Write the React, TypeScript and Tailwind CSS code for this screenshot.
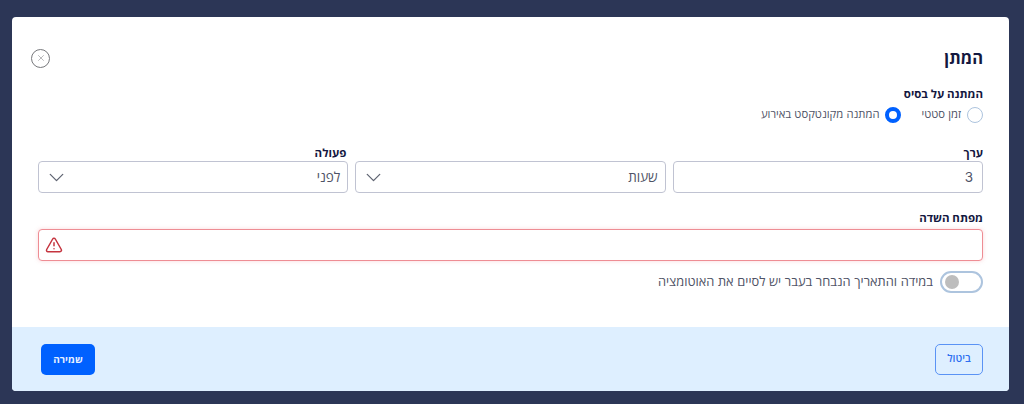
import { ChevronDown, TriangleAlert, X } from "lucide-react";

const labelClass = "block text-[11.5px] leading-[14px] font-bold text-[#14183f]";
const boxClass = "flex h-[32px] items-center rounded-[4px] border border-[#c0c3d2] bg-white pr-[7px] pl-[5px] text-[13.5px] text-[#4f5366]";

function Select({ value, label }: { value: string; label?: string }) {
  return (
    <div className="min-w-0 flex-1">
      <label className={`${labelClass} mb-[1px] h-[14px] pr-[2px]`}>{label}</label>
      <div className={`${boxClass} justify-between`}>
        <span>{value}</span>
        <ChevronDown size={25} strokeWidth={1.25} className="text-[#5f6472]" />
      </div>
    </div>
  );
}

export default function App() {
  return (
    <div className="h-[404px] w-[1024px] overflow-hidden bg-[#2c3656] pt-[17px] pl-[12px] font-['Inter','Open_Sans','Liberation_Sans',sans-serif]">
      <div dir="rtl" className="flex h-[374px] w-[997px] flex-col overflow-hidden rounded-[4px] bg-white">
        <div className="flex-1 px-[26px]">
          <div className="mt-[21px] flex h-[30px] items-center justify-between pt-[10px]">
            <h2 className="text-[16.5px] leading-[20px] font-bold text-[#14183f]">המתן</h2>
            <button className="ml-[-7px] flex h-[19px] w-[19px] items-center justify-center rounded-full border-[1.5px] border-[#77787c] text-[#77787c]">
              <X size={10} strokeWidth={1.25} />
            </button>
          </div>

          <label className={`${labelClass} mt-[19px]`}>המתנה על בסיס</label>
          <div className="mt-[5px] flex h-[17px] items-center gap-[21px] text-[11.25px] text-[#4f5366]">
            <label className="flex items-center gap-[6px]">
              <span className="h-[16px] w-[16px] rounded-full border-[1.5px] border-[#adc4de] bg-white" />
              זמן סטטי
            </label>
            <label className="flex items-center gap-[5px]">
              <span className="h-[16px] w-[16px] rounded-full border-[4px] border-[#0061ff] bg-white" />
              המתנה מקונטקסט באירוע
            </label>
          </div>

          <div className="mt-[23px] flex gap-[7px]">
            <div className="min-w-0 flex-1">
              <label className={`${labelClass} mb-[1px] h-[14px]`}>ערך</label>
              <div className={`${boxClass} h-[30px] pr-[9px]`}>3</div>
            </div>
            <Select value="שעות" />
            <Select value="לפני" label="פעולה" />
          </div>

          <label className={`${labelClass} mt-[18px]`}>מפתח השדה</label>
          <div className="mt-[4px] flex h-[32px] items-center justify-end rounded-[4px] border border-[#ee8d94] bg-white px-[6px] shadow-[0_0_4px_rgba(238,141,148,0.35)]">
            <TriangleAlert size={18} strokeWidth={2} className="text-[#c5343f]" />
          </div>

          <div className="mt-[10px] flex items-center gap-[7px]">
            <span className="flex h-[22px] w-[43px] items-center justify-end rounded-full border-[2px] border-[#adc4de] bg-white px-[3px]">
              <span className="h-[14px] w-[14px] rounded-full bg-[#bdbdbd]" />
            </span>
            <span className="text-[12.85px] leading-[18px] text-[#4f5366]">במידה והתאריך הנבחר בעבר יש לסיים את האוטומציה</span>
          </div>
        </div>

        <div className="flex h-[64px] items-center justify-between bg-[#deefff] pr-[26px] pl-[29px]">
          <button className="h-[31px] w-[48px] rounded-[5px] border border-[#5a93f5] text-[10.5px] font-semibold text-[#2f6ff0]">ביטול</button>
          <button className="h-[31px] w-[54px] rounded-[5px] bg-[#0061ff] text-[10px] font-bold text-[#e8f0ff]">שמירה</button>
        </div>
      </div>
    </div>
  );
}
